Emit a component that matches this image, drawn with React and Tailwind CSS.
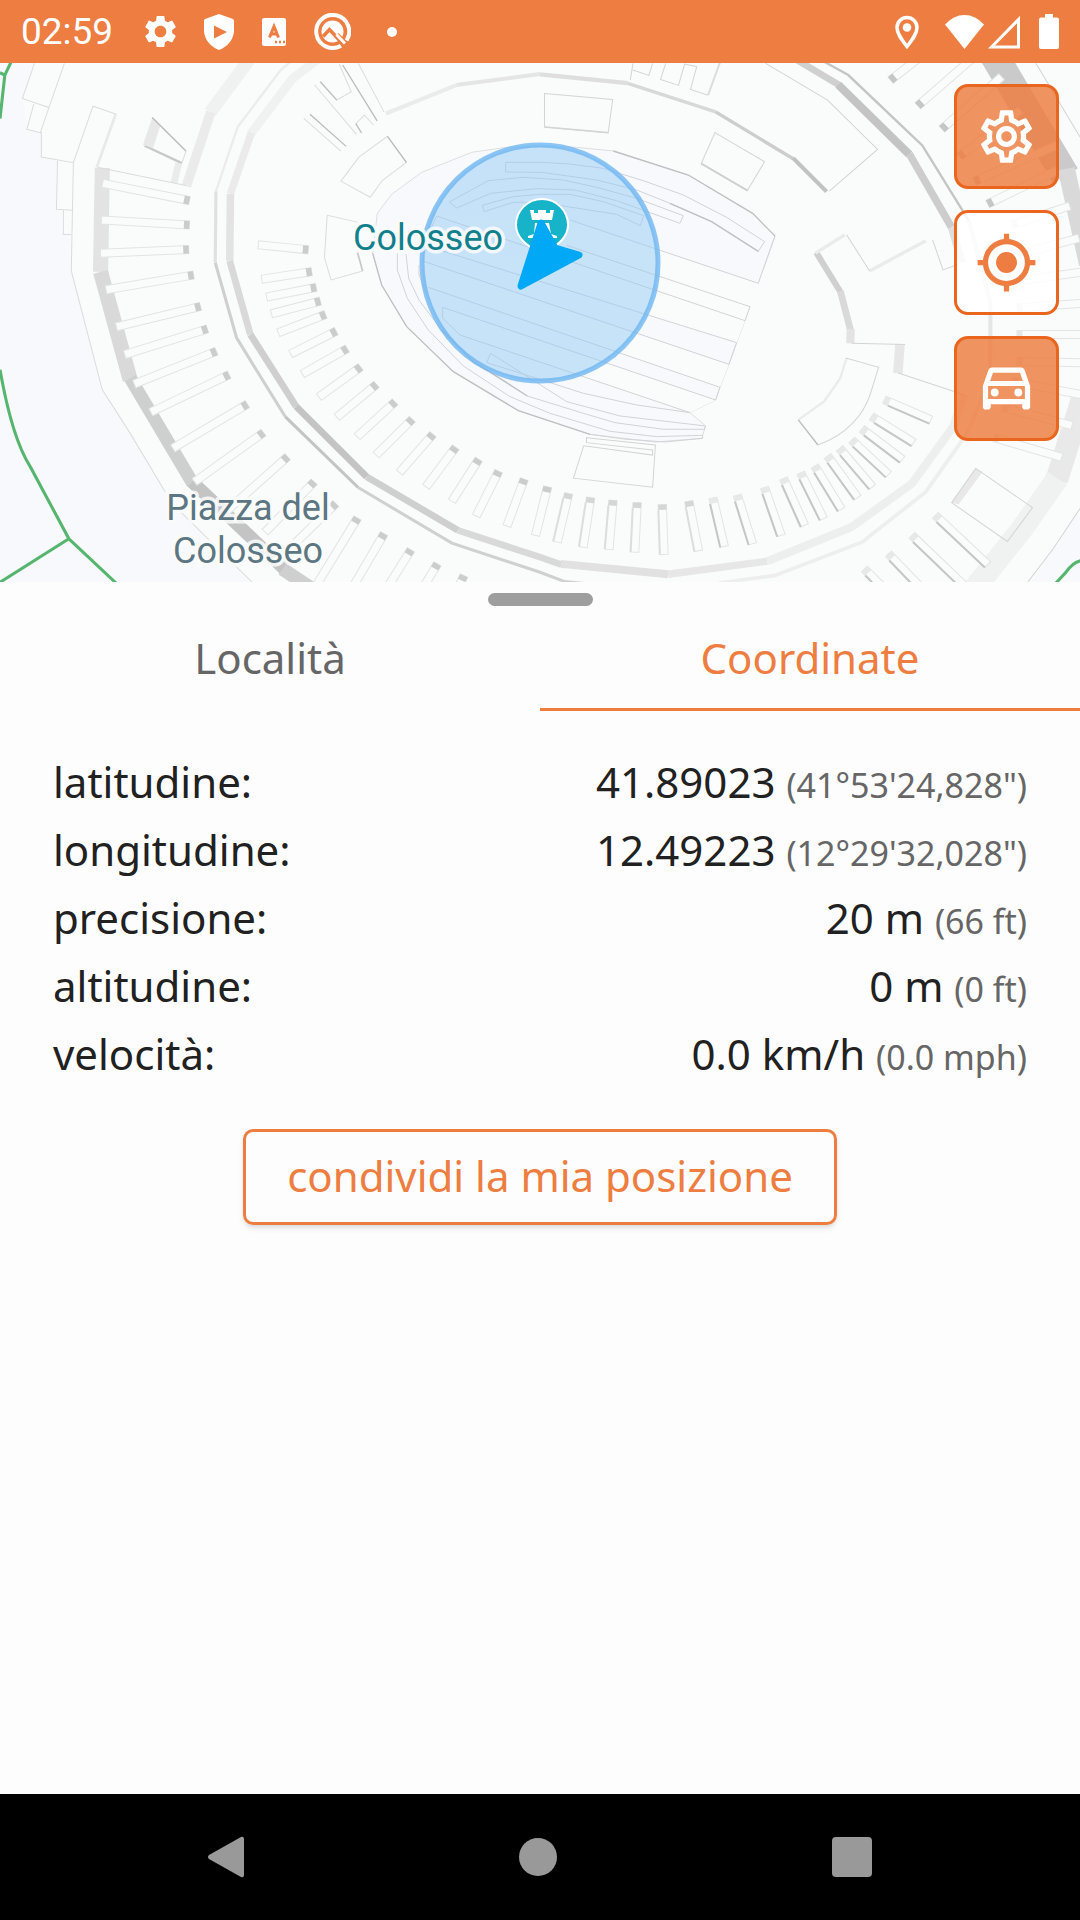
import React, { useState } from 'react'
import { MdSettings, MdOutlineSettings, MdMyLocation, MdOutlineDirectionsCar } from 'react-icons/md'

const BUILDING = '#fafcfb'
const GROUND = '#f8f9fc'

// [color, width, path]
const wallsWest = [
  ['#e3e3e3', 44, 'M297 322L292 633'],
  ['#d9d9d9', 44, 'M292 633L378 955'],
  ['#cecfcf', 38, 'M378 950L560 1265'],
  ['#c4c4c4', 38, 'M558 1260L728 1425L830 1525'],
  ['#cfcfcf', 40, 'M820 1520L900 1575'],
  ['#e9e9e9', 8, 'M336 162L281 320'],
  ['#f0f1f1', 38, 'M730 -10L610 157'],
  ['#ebebeb', 28, 'M612 155L541 377'],
  ['#ececec', 7, 'M850 0L815 30L690 200L627 392'],
  ['#e0e0e0', 9, 'M627 392L625 605'],
  ['#cfcfcf', 9, 'M625 605L687 830L828 1065'],
  ['#c4c4c4', 9, 'M828 1065L1040 1277'],
  ['#d0d0d0', 9, 'M1040 1277L1312 1443L1568 1530L1640 1558L1740 1568'],
  ['#f0f1f1', 26, 'M920 0L850 55L728 220'],
  ['#ebebeb', 22, 'M730 216L669 400'],
  ['#e3e3e3', 22, 'M669 400L667 600'],
  ['#d9d9d9', 20, 'M667 600L727 820'],
  ['#cfcfcf', 20, 'M727 820L860 1035'],
  ['#c4c4c4', 20, 'M860 1035L1065 1245'],
  ['#cfcfcf', 20, 'M1065 1245L1330 1405'],
  ['#d9d9d9', 20, 'M1330 1405L1568 1485L1630 1507'],
  ['#ebebeb', 12, 'M1120 160L1325 75'],
  ['#e5e5e5', 12, 'M1325 75L1568 42'],
  ['#c8c8c8', 7, 'M420 256L528 308'],
  ['#ebebeb', 20, 'M519 308L505 368'],
  ['#c8c8c8', 5, 'M1038 575L1053 630'],
]

const wallsEast = [
  ['#dedede', 13, 'M0 43L255 69'],
  ['#d8d8d8', 10, 'M255 70L510 155'],
  ['#cdcdcd', 10, 'M510 155L735 295'],
  ['#c2c2c2', 12, 'M735 293L832 393'],
  ['#d0d0d0', 20, 'M730 -10L870 76'],
  ['#c4c4c4', 24, 'M866 74L1072 282'],
  ['#cdcdcd', 22, 'M1072 280L1195 500'],
  ['#dddddd', 22, 'M1195 500L1225 605'],
  ['#c5c5c5', 7, 'M825 5L895 45L1110 255L1245 480'],
  ['#e6e6e6', 12, 'M1245 480L1308 725L1307 950'],
  ['#eeeeee', 11, 'M1307 950L1240 1115L1120 1290L935 1440L680 1540L520 1562'],
  ['#e1e1e1', 24, 'M60 1505L372 1536'],
  ['#e7e7e7', 22, 'M372 1536L660 1497'],
  ['#edeeee', 24, 'M660 1497L905 1395L1080 1265L1200 1095L1232 1000'],
  ['#cacaca', 84, 'M1315 -20L1525 345'],
  ['#d9d9d9', 50, 'M1528 325L1590 610'],
  ['#e9e9e9', 66, 'M1575 1010L1500 1255'],
  ['#f0f1f1', 66, 'M1502 1250L1400 1400L1260 1580'],
  ['#d0d0d0', 18, 'M802 575L872 692'],
  ['#d9d9d9', 20, 'M872 690L901 805'],
  ['#e3e3e3', 24, 'M902 803L901 846'],
  ['#e7e7e7', 28, 'M1045 850L1039 936'],
  ['#ebebeb', 10, 'M800 577L885 522'],
  ['#ebebeb', 10, 'M957 630L1120 540'],
  ['#ebebeb', 7, 'M890 890L872 950L825 1020L750 1075'],
  ['#bcbcbc', 4, 'M750 1075L807 1150'],
  ['#c2c2c2', 5, 'M468 309L602 390'],
  ['#d6d6d6', 5, 'M13 200L198 217'],
  ['#dddddd', 6, 'M525 0L488 105'],
]

const linesWest =
  'M100 10L65 115L142 142L187 10M142 142L117 217L78 207L98 132M120 215L120 290L213 307L270 138L338 162M167 302L164 446L210 449M184 449V521H207' +
  'M442 172L540 272L528 308M283 320L540 375M213 307L207 630L297 985L375 1110L480 1290M520 1345L740 1568' +
  'M985 12L1020 95L978 120M913 74L1035 222M882 174L990 272M1040 10L1115 155M1033 190L1058 165L1085 195' +
  'M1125 228L1180 306L1110 360L1075 410L990 362L1042 290Z M950 464L942 590L961 657L1053 630M950 464L1040 485'

const darkLinesWest = 'M930 65L978 120M995 15L1095 182M900 162L1005 258M1033 190L1050 218M442 172L540 272M1125 228L1180 306'

const linesEast =
  'M13 100L211 118L198 217L13 200Z M270 30L316 46L327 10M365 10L350 58L402 76L420 12L455 20L437 88L488 105M262 60L270 10' +
  'M508 217L652 304L602 390L468 309Z M655 10L835 120L980 267L840 392M890 522L957 630M1140 537L1170 627L1215 610' +
  'M905 846L1060 850M1040 935L1240 1003M888 890L983 918L960 995C940 1060 890 1120 807 1150' +
  'M1440 10L1568 230M1568 1340L1490 1460L1410 1568' +
  'M1265 1220L1430 1337L1357 1438L1195 1322Z' +
  'M135 1128L335 1150L327 1276L97 1249L127 1152L327 1180V1165L135 1143Z'

const arenaEdge = 'M515 50L410 52L305 67L155 127L65 193L22 250L8 370L35 465L110 590L250 725L445 842L660 913L855 936L998 925V916L1007 888L960 848L1037 810L1050 772L1077 703L1100 638L1125 572L1140 530L1165 460L1215 318L1148 250L955 135L730 63L620 52Z'

// strips between the rows of seats
const arenaStrips =
  'M590 346L1140 530L1125 572L200 258L600 270L1165 460L1180 415L1300 500L1140 530M240 370L1100 638L1125 572L560 380ZM155 392L1077 703L1050 772L175 472ZM218 532L1037 810L960 848L270 615L218 565Z'

const arenaLines =
  'M82 370V420L112 505L175 600L280 708L420 800L540 850L720 904L860 920L998 916V925L885 936L760 927L660 913' +
  'M108 372L116 445L148 512L215 600L310 695L400 750L472 798L640 850L735 878L880 898H1003L1007 888L750 858L590 815L362 670L350 698L500 745L640 790L800 825L960 848' +
  'M147 405V435L175 505M600 270L1165 460L1215 318M590 346L1140 530L1125 572L200 258L185 290' +
  'M160 345L240 370L1100 638L1077 703L155 392M175 472L1050 772L1037 810L218 532V565L270 615L960 848' +
  'M515 97H407V126L515 127L680 150L800 180L900 220L1025 275L1165 364L1184 335L1070 262L940 195L820 152L700 115L600 102Z' +
  'M238 216L260 234L362 190L500 176L615 180L740 212L930 280L940 257L800 205L680 172L580 150L460 142L355 152Z' +
  'M337 226L342 245L430 217L510 217L740 253L811 287L821 257L700 215L600 193H510L430 200Z'

const arenaDarkLines = 'M8 370L35 465L110 590L250 725L445 842L660 913M730 63L955 135L1148 250L1215 318M900 220L1025 275L1165 364M215 600L310 695L472 798'

// [x1, y1, x2, y2]: the shaded cap stands at the second point
const ribsWest = [
  [298, 368, 550, 420], [295, 478, 550, 493], [292, 577, 548, 566], [308, 686, 562, 642],
  [338, 797, 582, 736], [362, 880, 602, 803], [390, 968, 628, 870], [438, 1052, 665, 940],
  [502, 1160, 718, 1028], [565, 1260, 765, 1113], [660, 1345, 835, 1185], [770, 1410, 912, 1260],
  [800, 1500, 975, 1325], [900, 1600, 1038, 1368], [1010, 1600, 1115, 1415], [1110, 1600, 1193, 1463],
  [1215, 1600, 1270, 1505], [1320, 1600, 1347, 1540],
]

const ribsInner = [
  [750, 552, 895, 567], [760, 655, 905, 632], [774, 708, 918, 679], [788, 758, 930, 720],
  [808, 815, 945, 760], [844, 878, 976, 810], [878, 938, 1008, 862], [926, 1007, 1047, 917],
  [978, 1067, 1093, 969], [1037, 1125, 1147, 1021], [1092, 1180, 1197, 1073], [1160, 1232, 1257, 1118],
  [1237, 1275, 1323, 1157], [1312, 1318, 1390, 1193], [1383, 1362, 1448, 1228], [1472, 1392, 1522, 1252],
  [1555, 1420, 1590, 1275],
]

const ribsSouthEast = [
  [50, 1440, 83, 1295], [125, 1455, 147, 1307], [200, 1462, 212, 1315], [275, 1470, 282, 1322],
  [360, 1477, 355, 1328], [460, 1466, 432, 1318], [535, 1453, 502, 1308], [617, 1445, 573, 1300],
  [700, 1420, 652, 1277], [768, 1390, 707, 1250], [823, 1370, 757, 1233], [875, 1342, 798, 1213],
  [922, 1307, 835, 1183], [965, 1275, 870, 1160], [1012, 1238, 905, 1135], [1052, 1193, 935, 1102],
  [1085, 1143, 963, 1065], [1135, 1075, 1000, 1015],
  [1300, 1507, 1148, 1360], [1230, 1568, 1080, 1420], [1110, 1580, 1012, 1475], [1020, 1600, 942, 1520],
]

const ribsNorthEast = [
  [1130, -30, 1018, 60], [1250, 0, 1097, 137], [1340, 50, 1167, 206], [1395, 150, 1218, 288],
  [1500, 255, 1262, 362], [1500, 330, 1300, 430], [1538, 436, 1372, 492], [1565, 532, 1390, 580],
  [1600, 630, 1385, 660], [1600, 725, 1385, 740], [1600, 820, 1385, 820], [1600, 905, 1385, 900],
  [1600, 1005, 1370, 960], [1545, 1092, 1345, 1038], [1515, 1187, 1318, 1128],
]

const Rib = ({ at, cap = '#cccccc', line = '#e3e4e4', side }) => {
  const [x1, y1, x2, y2] = at
  const len = Math.hypot(x2 - x1, y2 - y1)
  const ux = (x2 - x1) / len
  const uy = (y2 - y1) / len
  const nx = -uy * 12
  const ny = ux * 12
  const cx = x2 - ux * 16
  const cy = y2 - uy * 16
  return (
    <g>
      <path d={`M${x1 + nx} ${y1 + ny}L${x2 + nx} ${y2 + ny}L${x2 - nx} ${y2 - ny}L${x1 - nx} ${y1 - ny}Z`} fill={BUILDING} stroke={line} strokeWidth="3" />
      <path d={`M${cx + nx} ${cy + ny}L${x2 + nx} ${y2 + ny}L${x2 - nx} ${y2 - ny}L${cx - nx} ${cy - ny}Z`} fill={cap} />
      {side && <path d={`M${x1 - nx} ${y1 - ny}L${cx - nx} ${cy - ny}`} stroke={side} strokeWidth="6" />}
    </g>
  )
}

const Walls = ({ items }) => items.map(([color, width, d]) => <path key={d} d={d} stroke={color} strokeWidth={width} fill="none" />)

const ColosseumMap = () => (
  <svg className="block h-full w-full" viewBox="0 0 1080 519" preserveAspectRatio="xMidYMid slice" role="img" aria-label="Mappa del Colosseo">
    <rect width="1080" height="519" fill={BUILDING} />
    <g transform="translate(0 -3) scale(0.3444 0.3348)">
      <path d="M0 0H100L65 115L78 207L120 215V290L167 302L164 446L184 449V521H207V630L297 985L480 1290L740 1580H0Z" fill={GROUND} />
      <path d="M3136 1340L3058 1460L2978 1580H3136Z" fill={GROUND} />
      <Walls items={wallsWest} />
      <path d="M442 172L465 198L445 262L415 254Z" fill="#e8e8e8" />
      <path d={linesWest} fill="none" stroke="#dcdcdc" strokeWidth="3" />
      <path d={darkLinesWest} fill="none" stroke="#bdbdbd" strokeWidth="4" />
      {ribsWest.map((r) => <Rib key={r.join()} at={r} />)}
      {ribsInner.map((r) => <Rib key={r.join()} at={r} />)}
      <g transform="translate(1568 0)">
        <Walls items={wallsEast} />
        <path d="M1265 1220L1285 1230L1215 1328L1195 1322Z" fill="#e8e8e8" />
        <path d={linesEast} fill="none" stroke="#d4d4d4" strokeWidth="3" />
        {ribsNorthEast.map((r, i) => <Rib key={r.join()} at={r} cap={i < 6 ? '#c6c6c6' : '#e6e6e6'} />)}
        {ribsSouthEast.map((r, i) => <Rib key={r.join()} at={r} cap={i < 6 ? '#d6d6d6' : '#e8e8e8'} side={i < 6 ? '#dddddd' : '#c6c6c6'} />)}
      </g>
      <g fill="none" stroke="#56b56f" strokeWidth="9">
        <path d="M35 0L14 45L0 175M0 38L14 45M0 925Q35 1130 88 1215L200 1430L350 1575M200 1430L0 1560" />
        <path d="M3050 1580L3095 1530Q3115 1500 3140 1495" />
      </g>
    </g>
    <g transform="translate(370 67) scale(0.3333)" strokeWidth="3">
      <path d={arenaEdge} fill={GROUND} stroke="#dddedf" />
      <path d={arenaStrips} fill={BUILDING} />
      <path d={arenaLines} fill="none" stroke="#d2d3d5" />
      <path d={arenaDarkLines} fill="none" stroke="#c0c1c2" strokeWidth="4" />
    </g>
    <circle cx="540" cy="200" r="118" fill="#90c8f5" fillOpacity="0.48" stroke="#6fb6f1" strokeOpacity="0.8" strokeWidth="5" />
    <path d="M542 192C534 186 516 178 516 162A26 26 0 0 1 568 162C568 178 550 186 542 192Z" fill="#16b3c9" stroke="#fff" strokeWidth="2" />
    <path d="M530 147h4v3h4v-3h8v3h4v-3h4l-2 10h-20zM535 160h14l2 11 6 2v2h-29v-2l6-2z" fill="#fff" />
    <path d="M541 160L555 185L579 192L521 223Z" fill="#00a8f5" stroke="#00a8f5" strokeWidth="7" strokeLinejoin="round" />
    <g className="font-[Roboto,sans-serif] text-[36px]" stroke={BUILDING} strokeWidth="7" strokeLinejoin="round" paintOrder="stroke" strokeOpacity="0.85">
      <text x="353" y="187" fill="#12808c">Colosseo</text>
      <g textAnchor="middle" fill="#5c7682">
        <text x="248" y="457">Piazza del</text>
        <text x="248" y="500">Colosseo</text>
      </g>
    </g>
  </svg>
)

const ShieldIcon = () => (
  <svg className="h-9 w-[30px]" viewBox="0 0 30 36" fill="currentColor">
    <path fillRule="evenodd" d="M15 0L29 5Q30 5.500 30 7V17Q29 30 15 36Q1 30 0 17V7Q0 5.500 1 5ZM10 11.500V24.500L23 18Z" />
  </svg>
)

const LetterIcon = () => (
  <svg className="h-7 w-6" viewBox="0 0 24 28">
    <rect width="24" height="28" rx="2" fill="currentColor" />
    <path d="M7.500 19.500L12 8.500L16.500 19.500M9 16H15" fill="none" stroke="#ed7d40" strokeWidth="3" />
    <path d="M13 24h2M17 24h2M21 24h2" stroke="#ed7d40" strokeWidth="2.500" />
  </svg>
)

const QIcon = () => (
  <svg className="size-[37px]" viewBox="0 0 37 37" fill="none" stroke="currentColor">
    <path d="M32.500 27.500A16.500 16.500 0 1 0 27 32.700" strokeWidth="4" />
    <circle cx="18.500" cy="18.500" r="11" fill="currentColor" stroke="none" />
    <path d="M9 23.500L15.500 16.500L28 30" stroke="#ed7d40" strokeWidth="3.500" />
    <path d="M23.500 21L32 30" stroke="#ed7d40" strokeWidth="3" />
    <path d="M22.500 21.500L31 30.500" strokeWidth="3" />
  </svg>
)

const StatusBar = () => (
  <header className="flex h-[63px] items-center justify-between bg-[#ed7d40] px-[21px] text-white">
    <div className="flex items-center">
      <time className="font-[Roboto,sans-serif] text-[37px] leading-none">02:59</time>
      <div className="ml-7 flex items-center gap-7">
        <MdSettings className="-mr-1 size-[39px]" />
        <ShieldIcon />
        <LetterIcon />
        <QIcon />
        <span className="ml-2 size-[10px] rounded-full bg-white" />
      </div>
    </div>
    <div className="flex items-center">
      <svg className="h-[34px] w-6" viewBox="0 0 24 34" fill="none" stroke="currentColor">
        <path d="M12 31.500C7 25 2 19 2 12.500A10 10 0 0 1 22 12.500C22 19 17 25 12 31.500Z" strokeWidth="3.500" />
        <circle cx="12" cy="12.500" r="4.300" fill="currentColor" stroke="none" />
      </svg>
      <svg className="ml-[26px] h-[34px] w-[39px]" viewBox="0 0 39 34" fill="currentColor">
        <path d="M0 9.500Q8.500 0 19.500 0T39 9.500L19.500 34Z" />
      </svg>
      <svg className="ml-1 h-[34px] w-8" viewBox="0 0 32 34" fill="none" stroke="currentColor" strokeWidth="3">
        <path d="M3.500 32L30.500 4.500V32Z" />
      </svg>
      <svg className="ml-[19px] h-[35px] w-5" viewBox="0 0 20 35" fill="currentColor">
        <path d="M6 0H14V3.500H18Q20 3.500 20 5.500V33Q20 35 18 35H2Q0 35 0 33V5.500Q0 3.500 2 3.500H6Z" />
      </svg>
    </div>
  </header>
)

const MapButton = ({ label, active, children }) => (
  <button
    type="button"
    aria-label={label}
    className={`flex size-[105px] items-center justify-center rounded-[14px] border-3 border-[#ea651d] ${active ? 'bg-white/85 text-[#ed7d40]' : 'bg-[#ed7d40]/83 text-white'}`}
  >
    {children}
  </button>
)

const rows = [
  { label: 'latitudine:', value: '41.89023', alt: '(41°53\'24,828")' },
  { label: 'longitudine:', value: '12.49223', alt: '(12°29\'32,028")' },
  { label: 'precisione:', value: '20 m', alt: '(66 ft)' },
  { label: 'altitudine:', value: '0 m', alt: '(0 ft)' },
  { label: 'velocità:', value: '0.0 km/h', alt: '(0.0 mph)' },
]

const tabs = ['Località', 'Coordinate']

const App = () => {
  const [tab, setTab] = useState('Coordinate')

  return (
    <div className="flex min-h-screen flex-col bg-[#fdfdfd] font-['Noto_Sans',sans-serif] text-[#212121]">
      <StatusBar />
      <section className="relative h-[519px] overflow-hidden">
        <ColosseumMap />
        <div className="absolute top-[21px] right-[21px] flex flex-col gap-[21px]">
          <MapButton label="Impostazioni"><MdOutlineSettings className="size-[63px]" /></MapButton>
          <MapButton label="La mia posizione" active><MdMyLocation className="size-[63px]" /></MapButton>
          <MapButton label="Auto"><MdOutlineDirectionsCar viewBox="0 1 24 24" className="size-[63px]" /></MapButton>
        </div>
      </section>

      <main className="flex flex-1 flex-col items-center">
        <div className="mt-[11px] h-[13px] w-[105px] rounded-full bg-[#9e9e9e]" />
        <div className="grid w-full grid-cols-2" role="tablist">
          {tabs.map((name) => (
            <button
              key={name}
              type="button"
              role="tab"
              aria-selected={tab === name}
              onClick={() => setTab(name)}
              className={`h-[105px] border-b-3 text-[42px] ${tab === name ? 'border-[#ed7d40] text-[#ed7d40]' : 'border-transparent text-[#666666]'}`}
            >
              {name}
            </button>
          ))}
        </div>

        <dl className="mt-9 w-full px-[53px]">
          {rows.map((row) => (
            <div key={row.label} className="flex h-[68px] items-center justify-between text-[42px]">
              <dt>{row.label}</dt>
              <dd>
                {row.value} <span className="text-[34px] text-[#666666]">{row.alt}</span>
              </dd>
            </div>
          ))}
        </dl>

        <button type="button" className="mt-[42px] flex h-24 items-center rounded-[10px] border-3 border-[#ed7d40] px-[41px] pb-1 text-[42px] text-[#ed7d40] shadow-md">
          condividi la mia posizione
        </button>
      </main>

      <nav className="flex h-[126px] items-center justify-between bg-black px-52 text-[#999999]">
        <button type="button" aria-label="Indietro">
          <svg className="h-[42px] w-9" viewBox="0 0 36 42" fill="currentColor">
            <path d="M1 19L33 1Q36 0 36 3V39Q36 42 33 41L1 23Q-1 21 1 19Z" />
          </svg>
        </button>
        <button type="button" aria-label="Home" className="size-[38px] rounded-full bg-[#999999]" />
        <button type="button" aria-label="Recenti" className="size-10 rounded-sm bg-[#999999]" />
      </nav>
    </div>
  )
}

export default App
